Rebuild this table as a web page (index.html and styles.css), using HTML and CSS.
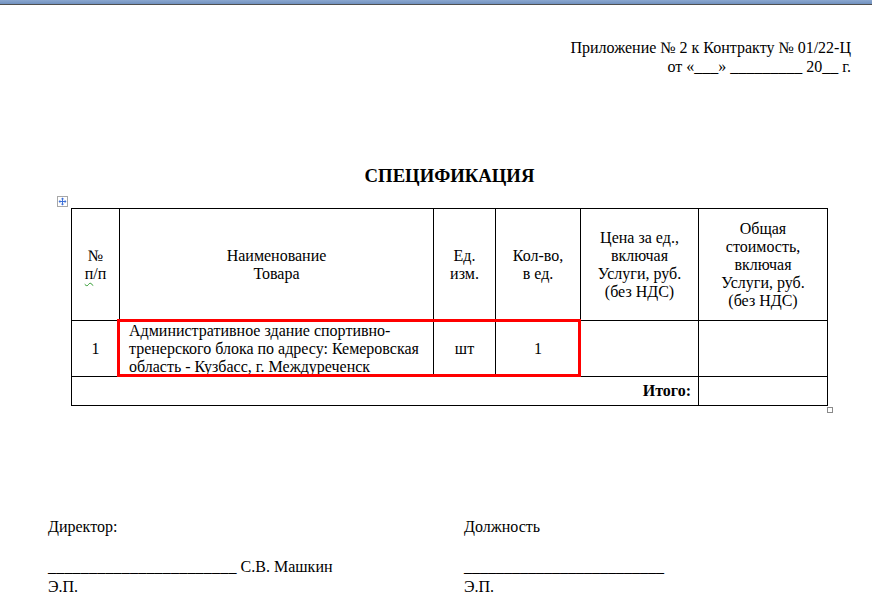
FILE: index.html
```html
<!DOCTYPE html>
<html lang="ru">
<head>
<meta charset="utf-8">
<title>Спецификация</title>
<link rel="stylesheet" href="styles.css">
</head>
<body>
<div class="topbar"></div>
<div class="page">
  <div class="appendix">
    <div>Приложение № 2 к Контракту № 01/22-Ц</div>
    <div>от «___» _________ 20__ г.</div>
  </div>
  <h1 class="title">СПЕЦИФИКАЦИЯ</h1>
  <div class="table-wrap">
    <span class="move-handle"><svg width="11" height="11" viewBox="0 0 11 11"><rect x="0.5" y="0.5" width="10" height="10" fill="#fff" stroke="#a8a8a8"/><path d="M5.5 3v5M3 5.5h5" stroke="#3c6fd8" stroke-width="1"/><path d="M5.5 1.5L3.8 3.3h3.4zM5.5 9.5L3.8 7.7h3.4zM1.5 5.5l1.8-1.7v3.4zM9.5 5.5L7.7 3.8v3.4z" fill="#3c6fd8"/></svg></span>
    <table class="spec">
      <colgroup>
        <col class="c1"><col class="c2"><col class="c3"><col class="c4"><col class="c5"><col class="c6">
      </colgroup>
      <tr class="head">
        <td>№<br><span class="spell">п</span>/п</td>
        <td>Наименование<br>Товара</td>
        <td>Ед.<br>изм.</td>
        <td>Кол-во,<br>в ед.</td>
        <td>Цена за ед.,<br>включая<br>Услуги, руб.<br>(без НДС)</td>
        <td>Общая<br>стоимость,<br>включая<br>Услуги, руб.<br>(без НДС)</td>
      </tr>
      <tr class="item">
        <td>1</td>
        <td class="name">Административное здание спортивно-тренерского блока по адресу: Кемеровская область - Кузбасс, г. Междуреченск</td>
        <td>шт</td>
        <td>1</td>
        <td></td>
        <td></td>
      </tr>
      <tr class="total">
        <td colspan="5" class="total-label">Итого:</td>
        <td></td>
      </tr>
    </table>
    <span class="highlight"></span>
    <span class="resize-handle"></span>
  </div>
  <div class="signs">
    <div class="sign">
      <div>Директор:</div>
      <div>&nbsp;</div>
      <div><span class="blank">_______________________</span> С.В. Машкин</div>
      <div>Э.П.</div>
    </div>
    <div class="sign">
      <div>Должность</div>
      <div>&nbsp;</div>
      <div>_________________________</div>
      <div>Э.П.</div>
    </div>
  </div>
</div>
</body>
</html>
```

FILE: styles.css
```css
html, body {
  margin: 0;
  padding: 0;
  background: #fff;
}
body {
  font-family: "Liberation Serif", "Times New Roman", serif;
  font-size: 16px;
  color: #000;
}
.topbar {
  height: 4px;
  background: linear-gradient(#8ba7d0, #7191bf);
  border-bottom: 1px solid #505050;
}
.page {
  padding: 0 21px 0 48px;
}
.appendix {
  margin-top: 33px;
  text-align: right;
  line-height: 19px;
}
.title {
  margin: 89px 0 0;
  font-size: 18.7px;
  font-weight: bold;
  line-height: 21px;
  text-align: center;
}
.table-wrap {
  position: relative;
  margin: 22px 0 0 23px;
  width: 756px;
}
.spec {
  border-collapse: collapse;
  table-layout: fixed;
  width: 756px;
  line-height: 18px;
}
.c1 { width: 48px; }
.c2 { width: 314px; }
.c3 { width: 62px; }
.c4 { width: 85px; }
.c5 { width: 118px; }
.c6 { width: 129px; }
.spec td {
  border: 1px solid #000;
  padding: 0 6px;
  text-align: center;
  vertical-align: middle;
}
.head td { height: 111px; }
.item td { height: 55px; }
.total td { height: 28px; }
.spec td.name {
  text-align: left;
  padding-left: 9px;
  padding-right: 4px;
}
.spec td.total-label {
  text-align: right;
  font-weight: bold;
  padding-right: 7px;
}
.spell {
  text-decoration: underline wavy #2e9a2e;
  text-decoration-thickness: 1px;
  text-underline-offset: 3px;
  text-decoration-skip-ink: none;
}
.blank {
  letter-spacing: 0.2px;
}
.move-handle {
  position: absolute;
  left: -14px;
  top: -12px;
  width: 11px;
  height: 11px;
  display: block;
}
.move-handle svg { display: block; }
.highlight {
  position: absolute;
  left: 46px;
  top: 111px;
  width: 458px;
  height: 52px;
  border: 3px solid #ff0000;
}
.resize-handle {
  position: absolute;
  left: 756px;
  top: 199px;
  width: 4px;
  height: 4px;
  border: 1px solid #8a8a8a;
}
.signs {
  display: grid;
  grid-template-columns: 416px 1fr;
  margin-top: 111px;
  line-height: 20px;
}
```
